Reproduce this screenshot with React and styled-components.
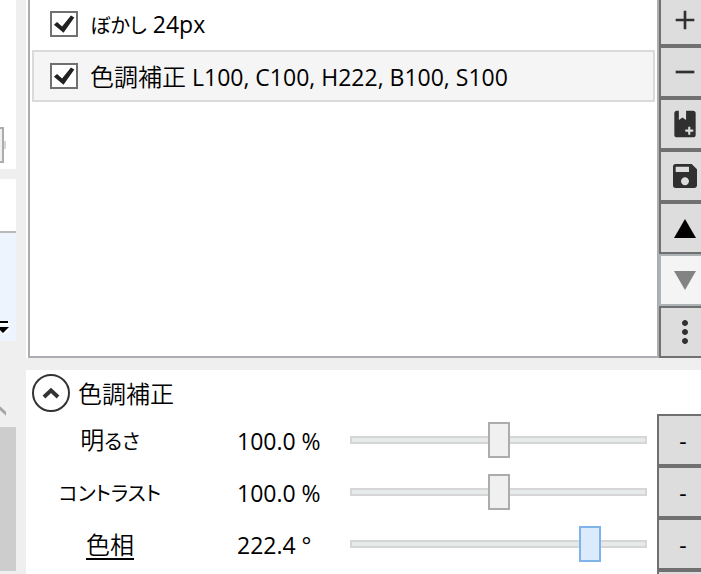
import React, { useState } from 'react';
import styled, { createGlobalStyle, ThemeProvider } from 'styled-components';
import { MdAdd, MdRemove, MdSave, MdMoreVert } from 'react-icons/md';

const theme = {
  colors: {
    page: '#efefef',
    panel: '#ffffff',
    icon: '#303030',
    button: '#dddddd',
    buttonBorder: '#707070',
    listBorder: '#abadb3',
    thumb: '#f0f0f0',
    thumbBorder: '#acacac',
    active: '#dcebfc',
    activeBorder: '#7eb4ea',
  },
};

const GlobalStyle = createGlobalStyle`
  * {
    box-sizing: border-box;
  }

  body {
    margin: 0;
    overflow: hidden;
    background-color: #efefef;
    color: #000000;
    font-family: 'Open Sans', 'Noto Sans CJK JP', sans-serif;
    font-size: 23px;
    line-height: 32px;
  }
`;

const Shell = styled.div`
  display: grid;
  grid-template-columns: 16px minmax(0, 1fr);
  column-gap: 10px;
  height: calc(100vh + 6px);
  margin: -6px -10px 0 0;
  overflow: hidden;
`;

const SideColumn = styled.aside`
  display: flex;
  flex-direction: column;
  overflow: hidden;
`;

const SidePanel = styled.section`
  display: flex;
  align-items: center;
  justify-content: flex-end;
  flex: none;
  height: 175px;
  padding: 127px 10px 0 0;
  margin-bottom: 10px;
  background-color: ${props => props.theme.colors.panel};
`;

const SideHeader = styled.div`
  flex: none;
  height: 54px;
  background-color: ${props => props.theme.colors.panel};
  border-bottom: 2px solid #b9b9b9;
`;

const SideToolbar = styled.div`
  display: flex;
  align-items: flex-end;
  flex: none;
  height: 108px;
  padding-bottom: 6px;
  background-color: #edf4fe;
`;

const SideScroller = styled.div`
  display: flex;
  flex-direction: column;
  justify-content: space-between;
  flex: none;
  height: 230px;
  padding-top: 64px;
`;

const ScrollThumb = styled.div`
  height: 144px;
  background-color: #cdcdcd;
`;

const MainColumn = styled.main`
  display: flex;
  flex-direction: column;
  gap: 12px;
`;

const EffectsPanel = styled.section`
  display: grid;
  grid-template-columns: minmax(0, 1fr) 52px;
  padding-left: 2px;
  background-color: ${props => props.theme.colors.panel};
`;

const EffectList = styled.ul`
  margin: 0;
  padding: 2px;
  list-style: none;
  border: 2px solid ${props => props.theme.colors.listBorder};
`;

const EffectItem = styled.li`
  height: 52px;
  border: 2px solid ${props => (props.$selected ? '#dadada' : 'transparent')};
  background-color: ${props => (props.$selected ? '#f5f5f5' : 'transparent')};
`;

const EffectLabel = styled.label`
  display: flex;
  align-items: center;
  gap: 12px;
  height: 100%;
  padding-left: 16px;
  white-space: pre;
`;

const CheckBox = styled.input`
  appearance: none;
  width: 28px;
  height: 26px;
  margin: 0;
  border: 2px solid ${props => props.theme.colors.buttonBorder};
  background-color: #ffffff;

  &:checked::before {
    content: '';
    display: block;
    height: 100%;
    background-color: #212121;
    clip-path: polygon(8% 53%, 21% 41%, 42% 61%, 79% 11%, 93% 20%, 48% 90%);
  }
`;

const Kanji = styled.span`
  font-family: 'Noto Sans CJK JP', sans-serif;
  font-size: 24px;
  font-weight: 350;
`;

const Kana = styled.span`
  font-family: 'Noto Sans CJK JP', sans-serif;
  font-size: 20px;
  font-weight: 400;
  font-feature-settings: 'palt';
`;

const Toolbar = styled.div`
  display: flex;
  flex-direction: column;
`;

const SquareButton = styled.button`
  display: flex;
  align-items: center;
  justify-content: center;
  width: 52px;
  height: 52px;
  padding: 0;
  color: ${props => props.theme.colors.icon};
  font: inherit;
  background-color: ${props => props.theme.colors.button};
  border: 2px solid ${props => props.theme.colors.buttonBorder};

  &:disabled {
    color: #838383;
    background-color: #f4f4f4;
    border-color: #adb2b5;
  }
`;

const StepButton = styled(SquareButton)`
  padding-top: 2px;
  color: #000000;
`;

const SettingsPanel = styled.section`
  flex: 1;
  padding-right: 2px;
  background-color: ${props => props.theme.colors.panel};
`;

const SettingsHeader = styled.header`
  display: flex;
  align-items: center;
  gap: 8px;
  height: 44px;
  padding: 2px 6px 0;
`;

const Expander = styled.button`
  display: flex;
  align-items: center;
  justify-content: center;
  width: 38px;
  height: 38px;
  padding: 0;
  border: 2px solid #333333;
  border-radius: 50%;
  background-color: #ffffff;
`;

const SettingsTitle = styled.h2`
  margin: 0;
  font-size: 24px;
  font-weight: 400;
`;

const SettingRow = styled.div`
  display: grid;
  grid-template-columns: 168px 136px minmax(0, 1fr) 52px;
  column-gap: 10px;
  align-items: center;
  height: 52px;
`;

const SettingLabel = styled.label`
  text-align: center;
  text-decoration: ${props => (props.$underlined ? 'underline' : 'none')};
  text-decoration-thickness: 2px;
  text-underline-offset: 4px;
`;

const SettingValue = styled.output`
  padding: 2px 0 0 33px;
  white-space: pre;
`;

const Slider = styled.input`
  appearance: none;
  flex: none;
  width: ${props => props.$width || '100%'};
  height: 36px;
  margin: 0;
  background: transparent;

  &::-webkit-slider-runnable-track {
    height: 8px;
    box-shadow: inset 0 0 0 2px #d6d6d6;
    background-color: #e7eaea;
  }

  &::-webkit-slider-thumb {
    appearance: none;
    width: 22px;
    height: 36px;
    margin-top: -14px;
    border: 2px solid
      ${props => props.theme.colors[props.$active ? 'activeBorder' : 'thumbBorder']};
    border-radius: 0;
    background-color: ${props => props.theme.colors[props.$active ? 'active' : 'thumb']};
  }
`;

const TriangleIcon = ({ down }) => (
  <svg width="22" height="20" viewBox="0 0 22 20" fill={down ? 'currentColor' : '#000000'}>
    <path d={down ? 'M0 1H22L11 20Z' : 'M0 20H22L11 1Z'} />
  </svg>
);

const BookPlusIcon = () => (
  <svg width="32" height="32" viewBox="0 0 24 24" fill="currentColor" fillRule="evenodd">
    <path d="M6 2H7.4V9L10.1 7.2L12.8 9V2H18A2 2 0 0 1 20 4V20A2 2 0 0 1 18 22H6A2 2 0 0 1 4 20V4A2 2 0 0 1 6 2ZM14.4 14V16.2H12.2V17.8H14.4V20H16V17.8H18.2V16.2H16V14Z" />
  </svg>
);

const ExpandIcon = () => (
  <svg width="18" height="12" viewBox="0 0 18 12" fill="none" stroke="#333333" strokeWidth="4">
    <path d="M2 10L9 3.4L16 10" />
  </svg>
);

const OverflowIcon = () => (
  <svg width="12" height="14" viewBox="0 0 12 14">
    <path d="M0 2H10V4H0ZM0 8L10 8L4 14Z" fill="#ffffff" />
    <path d="M0 0H8V2H0ZM0 6H9L3 12L0 9Z" fill="#000000" />
  </svg>
);

const ScrollUpIcon = () => (
  <svg width="6" height="12" viewBox="0 0 6 12" fill="none" stroke="#a6a6a6" strokeWidth="3">
    <path d="M-2 1.5L8 10.5" />
  </svg>
);

const settings = [
  {
    id: 'brightness',
    label: (
      <>
        <Kanji>明</Kanji>
        <Kana>るさ</Kana>
      </>
    ),
    value: 100,
    max: 200,
    unit: '%',
  },
  { id: 'contrast', label: <Kana>コントラスト</Kana>, value: 100, max: 200, unit: '%' },
  {
    id: 'hue',
    label: <Kanji>色相</Kanji>,
    value: 222.4,
    max: 267,
    unit: '°',
    active: true,
  },
];

const Setting = ({ id, label, value: initial, max, unit, active }) => {
  const [value, setValue] = useState(initial);
  return (
    <SettingRow>
      <SettingLabel htmlFor={id} $underlined={active}>
        {label}
      </SettingLabel>
      <SettingValue htmlFor={id}>{`${value.toFixed(1)} ${unit}`}</SettingValue>
      <Slider
        id={id}
        type="range"
        min="0"
        max={max}
        step="0.1"
        value={value}
        $active={active}
        onChange={e => setValue(Number(e.target.value))}
      />
      <StepButton type="button">-</StepButton>
    </SettingRow>
  );
};

const App = () => (
  <ThemeProvider theme={theme}>
    <GlobalStyle />
    <Shell>
      <SideColumn>
        <SidePanel>
          <Slider type="range" defaultValue="95" $width="64px" aria-label="zoom" />
        </SidePanel>
        <SideHeader />
        <SideToolbar>
          <OverflowIcon />
        </SideToolbar>
        <SideScroller>
          <ScrollUpIcon />
          <ScrollThumb />
        </SideScroller>
      </SideColumn>
      <MainColumn>
        <EffectsPanel>
          <EffectList>
            <EffectItem>
              <EffectLabel>
                <CheckBox type="checkbox" defaultChecked />
                <span>
                  <Kana>ぼかし</Kana> 24px
                </span>
              </EffectLabel>
            </EffectItem>
            <EffectItem $selected>
              <EffectLabel>
                <CheckBox type="checkbox" defaultChecked />
                <span>
                  <Kanji>色調補正</Kanji> L100, C100, H222, B100, S100
                </span>
              </EffectLabel>
            </EffectItem>
          </EffectList>
          <Toolbar>
            <SquareButton type="button" aria-label="add">
              <MdAdd size={32} />
            </SquareButton>
            <SquareButton type="button" aria-label="remove">
              <MdRemove size={32} />
            </SquareButton>
            <SquareButton type="button" aria-label="add preset">
              <BookPlusIcon />
            </SquareButton>
            <SquareButton type="button" aria-label="save">
              <MdSave size={32} />
            </SquareButton>
            <SquareButton type="button" aria-label="move up">
              <TriangleIcon />
            </SquareButton>
            <SquareButton type="button" aria-label="move down" disabled>
              <TriangleIcon down />
            </SquareButton>
            <SquareButton type="button" aria-label="more">
              <MdMoreVert size={36} />
            </SquareButton>
          </Toolbar>
        </EffectsPanel>
        <SettingsPanel>
          <SettingsHeader>
            <Expander type="button" aria-label="collapse">
              <ExpandIcon />
            </Expander>
            <SettingsTitle>
              <Kanji>色調補正</Kanji>
            </SettingsTitle>
          </SettingsHeader>
          {settings.map(setting => (
            <Setting key={setting.id} {...setting} />
          ))}
          <SettingRow>
            <span />
            <span />
            <span />
            <StepButton type="button" aria-label="decrease" />
          </SettingRow>
        </SettingsPanel>
      </MainColumn>
    </Shell>
  </ThemeProvider>
);

export default App;
